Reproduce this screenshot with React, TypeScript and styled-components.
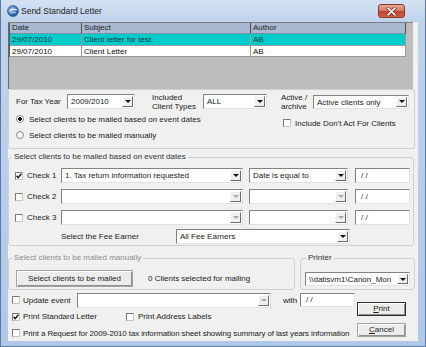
import React from "react";
import styled, { createGlobalStyle } from "styled-components";

const GlobalStyle = createGlobalStyle`
  html, body { margin: 0; padding: 0; background: #b9cfe9; }
  body {
    font-family: "Liberation Sans", Arial, sans-serif;
    font-size: 8px;
    color: #1a1a1a;
  }
  *, *::before, *::after { box-sizing: border-box; }
`;

const Window = styled.div`
  width: 426px;
  height: 347px;
  display: flex;
  flex-direction: column;
  background: linear-gradient(180deg, #d3e1f2 0px, #bfd3ec 22px, #b0c8e7 100%);
  border-left: 1px solid #5a7aa3;
  border-right: 1px solid #5a7aa3;
  border-bottom: 1px solid #5a7aa3;
  padding: 0 7px 5px 7px;
  overflow: hidden;
`;

const TitleBar = styled.div`
  height: 22px;
  flex: none;
  display: flex;
  align-items: flex-start;
`;

const AppIcon = styled.svg`
  width: 12px;
  height: 12px;
  margin: 5px 0 0 -1px;
  flex: none;
`;

const Title = styled.span`
  margin: 6px 0 0 2px;
  font-size: 8.5px;
  line-height: 11px;
  color: #1b1b1b;
  white-space: nowrap;
`;

const CloseButton = styled.div`
  margin: 4px 13px 0 auto;
  width: 27px;
  height: 14px;
  border-radius: 3px;
  border: 1px solid #8b3a2c;
  background: linear-gradient(180deg, #e9a898 0%, #d77a67 45%, #c4432e 55%, #cf5e47 100%);
  display: flex;
  align-items: center;
  justify-content: center;
`;

const Client = styled.div`
  flex: 1;
  min-height: 0;
  background: #f0f0f0;
  display: flex;
  flex-direction: column;
`;

const ListArea = styled.div`
  width: 405px;
  height: 67px;
  flex: none;
  background: #bdbdbd;
  border-top: 1px solid #7d7d7d;
  border-left: 1px solid #6a6a6a;
`;

const ListGrid = styled.div`
  display: grid;
  grid-template-columns: 72px 169px 155px;
  grid-template-rows: 11px 12px 11px;
  border-left: 1px solid #5c5c5c;
`;

const HeadCell = styled.div`
  background: #a9b9d1;
  border-right: 1px solid #4f4f4f;
  border-bottom: 1px solid #7e8ea6;
  padding-left: 2px;
  line-height: 10px;
  color: #1e1e1e;
  white-space: nowrap;
`;

const Cell = styled.div<{ $sel?: boolean }>`
  background: ${(p) => (p.$sel ? "#00cccc" : "#ffffff")};
  border-right: 1px solid #9a9a9a;
  border-bottom: 1px solid #9a9a9a;
  padding-left: 2px;
  line-height: 11px;
  color: ${(p) => (p.$sel ? "#003838" : "#111")};
  white-space: nowrap;
`;

const Panel = styled.div`
  width: 407px;
  flex: none;
  border: 1px solid #d0d0d0;
  border-radius: 2px;
  padding: 2px 0 5px 7px;
`;

const FieldRow = styled.div<{ $h: number }>`
  display: flex;
  align-items: center;
  height: ${(p) => p.$h}px;
  white-space: nowrap;
`;

const Label = styled.span<{ $w: number; $ml?: number; $dim?: boolean; $tight?: boolean }>`
  flex: none;
  width: ${(p) => p.$w}px;
  margin-left: ${(p) => p.$ml ?? 0}px;
  line-height: 9px;
  white-space: nowrap;
  letter-spacing: ${(p) => (p.$tight ? "-0.12px" : "normal")};
  color: ${(p) => (p.$dim ? "#8a8a8a" : "#1a1a1a")};
`;

const ComboBox = styled.div<{ $w: number; $h: number }>`
  flex: none;
  display: flex;
  width: ${(p) => p.$w}px;
  height: ${(p) => p.$h}px;
  background: #fff;
  border: 1px solid;
  border-color: #828282 #e2e2e2 #e2e2e2 #828282;
  padding: 1px;
`;

const ComboText = styled.span`
  flex: 1;
  min-width: 0;
  overflow: hidden;
  padding-left: 2px;
  line-height: 11px;
  white-space: nowrap;
  color: #1a1a1a;
`;

const DropButton = styled.span`
  flex: none;
  width: 11px;
  background: #efefef;
  border: 1px solid;
  border-color: #ffffff #6c6c6c #6c6c6c #ffffff;
  display: flex;
  align-items: center;
  justify-content: center;
`;

const Arrow = styled.span<{ $off?: boolean }>`
  width: 0;
  height: 0;
  border-left: 3px solid transparent;
  border-right: 3px solid transparent;
  border-top: 3px solid ${(p) => (p.$off ? "#a8a8a8" : "#111")};
`;

const DateBox = styled.div<{ $h: number }>`
  flex: none;
  width: 55px;
  height: ${(p) => p.$h}px;
  background: #fff;
  border: 1px solid;
  border-color: #828282 #e2e2e2 #e2e2e2 #828282;
  padding-left: 5px;
  line-height: ${(p) => p.$h - 2}px;
  color: #333;
`;

const OptionsRow = styled.div`
  display: flex;
`;

const RadioCol = styled.div`
  width: 267px;
  flex: none;
  display: flex;
  flex-direction: column;
`;

const Option = styled.div<{ $gap: number; $mt?: number }>`
  display: flex;
  align-items: center;
  height: 16px;
  margin-top: ${(p) => p.$mt ?? 0}px;
  gap: ${(p) => p.$gap}px;
  white-space: nowrap;
`;

const RadioDot = styled.span<{ $on?: boolean }>`
  flex: none;
  width: 8px;
  height: 8px;
  border-radius: 50%;
  border: 1px solid #8a8a8a;
  background: ${(p) =>
    p.$on ? "radial-gradient(circle at 50% 50%, #111 0 1.6px, #fff 1.8px)" : "#fbfbfb"};
`;

const CheckSquare = styled.span<{ $mr?: number }>`
  flex: none;
  width: 8px;
  height: 8px;
  margin-right: ${(p) => p.$mr ?? 0}px;
  background: #fff;
  border: 1px solid;
  border-color: #7a7a7a #c8c8c8 #c8c8c8 #7a7a7a;
  display: flex;
  align-items: center;
  justify-content: center;
`;

const Group = styled.fieldset<{ $w: number; $mt?: number }>`
  flex: none;
  width: ${(p) => p.$w}px;
  margin: ${(p) => p.$mt ?? 0}px 0 0 0;
  padding: 0;
  min-width: 0;
  border: 1px solid #d0d0d0;
  border-radius: 3px;
`;

const Legend = styled.legend<{ $dim?: boolean; $ml: number }>`
  margin-left: ${(p) => p.$ml}px;
  padding: 0 2px;
  line-height: 10px;
  font-size: 8px;
  color: ${(p) => (p.$dim ? "#8d8d8d" : "#303030")};
  white-space: nowrap;
`;

const GroupBody = styled.div<{ $pad: string }>`
  padding: ${(p) => p.$pad};
  display: flex;
  flex-direction: column;
`;

const GroupRow = styled.div`
  display: flex;
  gap: 5px;
  margin-top: 7px;
  flex: none;
`;

const PushButton = styled.div<{ $w: number; $h: number; $default?: boolean }>`
  flex: none;
  width: ${(p) => p.$w}px;
  height: ${(p) => p.$h}px;
  background: #ececec;
  border: 1px solid ${(p) => (p.$default ? "#2e2e2e" : "#a3a3a3")};
  box-shadow: inset 1px 1px 0 #ffffff, inset -1px -1px 0 #8e8e8e;
  display: flex;
  align-items: center;
  justify-content: center;
  line-height: 10px;
  color: #1a1a1a;
  white-space: nowrap;
`;

const Bottom = styled.div`
  flex: 1;
  display: flex;
`;

const BottomLeft = styled.div`
  flex: 1;
  min-width: 0;
  display: flex;
  flex-direction: column;
  padding: 2px 0 0 4px;
`;

const ButtonCol = styled.div`
  flex: none;
  width: 49px;
  margin-right: 12px;
  padding-top: 12px;
  display: flex;
  flex-direction: column;
  gap: 7px;
`;

const Key = styled.span`
  text-decoration: underline;
`;

function Combo({ w, h = 15, value = "", off = false }: { w: number; h?: number; value?: string; off?: boolean }) {
  return (
    <ComboBox $w={w} $h={h}>
      <ComboText>{value}</ComboText>
      <DropButton>
        <Arrow $off={off} />
      </DropButton>
    </ComboBox>
  );
}

function Check({ on = false, mr = 0 }: { on?: boolean; mr?: number }) {
  return (
    <CheckSquare $mr={mr}>
      {on && (
        <svg width="6" height="6" viewBox="0 0 6 6">
          <polyline points="0.6,2.8 2.2,4.6 5.4,0.8" fill="none" stroke="#111" strokeWidth="1.4" />
        </svg>
      )}
    </CheckSquare>
  );
}

const rows = [
  { date: "29/07/2010", subject: "Client letter for test", author: "AB", sel: true },
  { date: "29/07/2010", subject: "Client Letter", author: "AB", sel: false },
];

export default function App() {
  return (
    <>
      <GlobalStyle />
      <Window>
        <TitleBar>
          <AppIcon viewBox="0 0 12 12">
            <defs>
              <radialGradient id="ig" cx="40%" cy="35%" r="70%">
                <stop offset="0%" stopColor="#9cc4ee" />
                <stop offset="60%" stopColor="#3f74bd" />
                <stop offset="100%" stopColor="#1d4c8e" />
              </radialGradient>
            </defs>
            <circle cx="6" cy="6" r="5.5" fill="url(#ig)" stroke="#27507f" strokeWidth="0.6" />
            <path d="M2.2 6.6 C3.5 4.2 7 3.6 9.8 5" fill="none" stroke="#fff" strokeWidth="1.1" />
            <path d="M3 8.4 C4.8 7.2 7.2 7 9 7.8" fill="none" stroke="#e8f2ff" strokeWidth="0.8" />
          </AppIcon>
          <Title>Send Standard Letter</Title>
          <CloseButton>
            <svg width="11" height="9" viewBox="0 0 11 9">
              <path d="M2 1.2 L9 7.8 M9 1.2 L2 7.8" stroke="#6b2217" strokeWidth="3" strokeLinecap="round" />
              <path d="M2 1.2 L9 7.8 M9 1.2 L2 7.8" stroke="#ffffff" strokeWidth="1.7" strokeLinecap="round" />
            </svg>
          </CloseButton>
        </TitleBar>

        <Client>
          <ListArea>
            <ListGrid>
              <HeadCell>Date</HeadCell>
              <HeadCell>Subject</HeadCell>
              <HeadCell>Author</HeadCell>
              {rows.map((r) => (
                <React.Fragment key={r.subject}>
                  <Cell $sel={r.sel}>{r.date}</Cell>
                  <Cell $sel={r.sel}>{r.subject}</Cell>
                  <Cell $sel={r.sel}>{r.author}</Cell>
                </React.Fragment>
              ))}
            </ListGrid>
          </ListArea>

          <Panel>
            <FieldRow $h={19}>
              <Label $w={51}>For Tax Year</Label>
              <Combo w={68} value="2009/2010" />
              <Label $w={51} $ml={17}>
                Included
                <br />
                Client Types
              </Label>
              <Combo w={64} value="ALL" />
              <Label $w={32} $ml={14}>
                Active /
                <br />
                archive
              </Label>
              <Combo w={96} h={14} value="Active clients only" />
            </FieldRow>
            <OptionsRow>
              <RadioCol>
                <Option $gap={5}>
                  <RadioDot $on />
                  Select clients to be mailed based on event dates
                </Option>
                <Option $gap={5}>
                  <RadioDot />
                  Select clients to be mailed manually
                </Option>
              </RadioCol>
              <Option $gap={0} $mt={4}>
                <Check mr={4} />
                Include Don't Act For Clients
              </Option>
            </OptionsRow>
          </Panel>

          <Group $w={406} $mt={3}>
            <Legend $ml={3}>Select clients to be mailed based on event dates</Legend>
            <GroupBody $pad="3px 0 0 6px">
              <FieldRow $h={21}>
                <Check on mr={4} />
                <Label $w={34}>Check 1</Label>
                <Combo w={182} value="1. Tax return information requested" />
                <Label $w={0} $ml={6} />
                <Combo w={99} value="Date is equal to" />
                <Label $w={0} $ml={7} />
                <DateBox $h={15}>/ /</DateBox>
              </FieldRow>
              <FieldRow $h={21}>
                <Check mr={4} />
                <Label $w={34}>Check 2</Label>
                <Combo w={182} off />
                <Label $w={0} $ml={6} />
                <Combo w={99} off />
                <Label $w={0} $ml={7} />
                <DateBox $h={15}>/ /</DateBox>
              </FieldRow>
              <FieldRow $h={21}>
                <Check mr={4} />
                <Label $w={34}>Check 3</Label>
                <Combo w={182} off />
                <Label $w={0} $ml={6} />
                <Combo w={99} off />
                <Label $w={0} $ml={7} />
                <DateBox $h={15}>/ /</DateBox>
              </FieldRow>
              <FieldRow $h={17}>
                <Label $w={115} $ml={46}>Select the Fee Earner</Label>
                <Combo w={174} value="All Fee Earners" />
              </FieldRow>
            </GroupBody>
          </Group>

          <GroupRow>
            <Group $w={287}>
              <Legend $ml={3} $dim>Select clients to be mailed manually</Legend>
              <GroupBody $pad="7px 0 2px 7px">
                <FieldRow $h={17}>
                  <PushButton $w={117} $h={17}>Select clients to be mailed</PushButton>
                  <Label $w={130} $ml={15}>0 Clients selected for mailing</Label>
                </FieldRow>
              </GroupBody>
            </Group>
            <Group $w={115}>
              <Legend $ml={5}>Printer</Legend>
              <GroupBody $pad="9px 0 0 4px">
                <Combo w={105} h={14} value="\\datisvm1\Canon_Mon" />
              </GroupBody>
            </Group>
          </GroupRow>

          <Bottom>
            <BottomLeft>
              <FieldRow $h={16}>
                <Check mr={3} />
                <Label $w={54}>Update event</Label>
                <Combo w={194} off />
                <Label $w={17} $ml={12}>with</Label>
                <DateBox $h={14}>/ /</DateBox>
              </FieldRow>
              <FieldRow $h={17}>
                <Check on mr={3} />
                <Label $w={103}>Print Standard Letter</Label>
                <Check mr={4} />
                <Label $w={100}>Print Address Labels</Label>
              </FieldRow>
              <FieldRow $h={16}>
                <Check mr={3} />
                <Label $w={330} $tight>
                  Print a Request for 2009-2010 tax information sheet showing summary of last years information
                </Label>
              </FieldRow>
            </BottomLeft>
            <ButtonCol>
              <PushButton $w={49} $h={14} $default>
                <Key>P</Key>rint
              </PushButton>
              <PushButton $w={49} $h={14}>
                <Key>C</Key>ancel
              </PushButton>
            </ButtonCol>
          </Bottom>
        </Client>
      </Window>
    </>
  );
}
